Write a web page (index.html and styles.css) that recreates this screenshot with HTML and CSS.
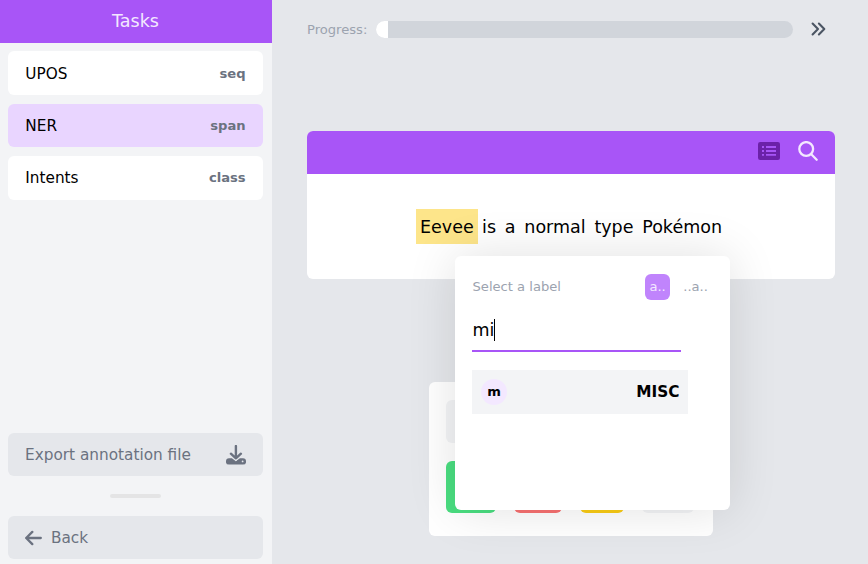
FILE: index.html
```html
<!DOCTYPE html>
<html lang="en">
<head>
<meta charset="utf-8">
<title>Annotation</title>
<link rel="stylesheet" href="styles.css">
</head>
<body>
<div class="app">
  <aside class="sidebar">
    <h1 class="sidebar-title">Tasks</h1>
    <nav class="tasks">
      <div class="task"><span>UPOS</span><b>seq</b></div>
      <div class="task active"><span>NER</span><b>span</b></div>
      <div class="task"><span>Intents</span><b>class</b></div>
    </nav>
    <div class="actions">
      <div class="action export"><span>Export annotation file</span>
        <svg class="download" width="20" height="20" viewBox="0 0 20 20"><path d="M3 13.3H6.3L9.9 16.2L13.5 13.3H17A3 3 0 0 1 20 16.3A3 3 0 0 1 17 19.6H3A3 3 0 0 1 0 16.3A3 3 0 0 1 3 13.3Z" fill="currentColor"/><path d="M9.9 1V13.2M4.9 8.7L9.9 13.3L14.9 8.7" fill="none" stroke="currentColor" stroke-width="2.4" stroke-linecap="round" stroke-linejoin="round"/><path d="M5.9 12.6L9.9 15.7L13.9 12.6" fill="none" stroke="#e5e7eb" stroke-width=".8"/><circle cx="16.6" cy="16.4" r=".9" fill="#e5e7eb"/></svg>
      </div>
      <div class="divider"></div>
      <div class="action"><svg width="17" height="16" viewBox="0 0 17 16"><path d="M15.8 8H1.5M7.3 1.9L1.2 8L7.3 14.1" fill="none" stroke="currentColor" stroke-width="2.3" stroke-linecap="round" stroke-linejoin="round"/></svg><span class="back">Back</span></div>
    </div>
  </aside>
  <main class="main">
    <div class="progress">
      <span class="progress-label">Progress:</span>
      <div class="track"><div class="fill"></div></div>
      <svg class="next" width="15" height="14" viewBox="0 0 15 14"><path d="M1.6 1.6L7 7L1.6 12.4M7.9 1.6L13.3 7L7.9 12.4" fill="none" stroke="currentColor" stroke-width="2.1" stroke-linecap="round" stroke-linejoin="round"/></svg>
    </div>
    <section class="document">
      <header class="document-bar">
        <svg class="list" width="22" height="18" viewBox="0 0 22 18"><rect width="22" height="18" rx="2.2" fill="#6b21a8"/><path d="M4 5H6M4 9H6M4 12.8H6M8 5H18M8 9H18M8 12.8H18" stroke="#a855f7" stroke-width="1.8"/></svg>
        <svg class="search" width="21" height="21" viewBox="0 0 21 21"><g fill="none" stroke="#f3e8ff" stroke-width="2.3" stroke-linecap="round"><circle cx="8.2" cy="8" r="6.9"/><path d="M13.3 13.3L18.7 18.7"/></g></svg>
      </header>
      <p class="sentence"><span class="token marked">Eevee</span><span class="token">is</span><span class="token">a</span><span class="token">normal</span><span class="token">type</span><span class="token">Pokémon</span></p>
      <div class="popup">
        <div class="popup-head"><span class="hint">Select a label</span><span class="mode on">a..</span><span class="mode">..a..</span></div>
        <div class="query">mi<i class="caret"></i></div>
        <div class="option"><span class="key">m</span><b>MISC</b></div>
      </div>
    </section>
    <section class="controls">
      <div class="control-row"></div>
      <div class="buttons"><span class="accept"></span><span class="reject"></span><span class="ignore"></span><span class="undo"></span></div>
    </section>
  </main>
</div>
</body>
</html>
```
FILE: styles.css
```css
* { box-sizing: border-box; }
html { font-size: 17.5px; }
body { margin: 0; font-family: "DejaVu Sans", sans-serif; line-height: 1.5; color: #000; }
.app { display: flex; width: 868px; height: 564px; overflow: hidden; background: #e5e7eb; }
svg { display: block; flex: none; }

.sidebar { width: 272px; flex: none; display: flex; flex-direction: column; background: #f3f4f6; }
.sidebar-title { margin: 0; height: 43px; padding-right: 1px; text-align: center; font-size: 17.5px; font-weight: 400; line-height: 42px; color: #f3e8ff; background: #a855f7; }
.tasks { padding: 8.3px 9px 0 8px; display: flex; flex-direction: column; gap: 8.5px; }
.task { height: 43.8px; padding: 2px 17.4px 0 17.3px; display: flex; align-items: center; justify-content: space-between; border-radius: 6px; background: #fff; font-size: 15.31px; }
.task.active { background: #e9d5ff; }
.task b { margin-top: -1px; font-size: 13.12px; color: #6b7280; }
.actions { margin-top: auto; padding: 0 9px 5px 8px; }
.action { height: 43px; padding: 1px 17px 0; display: flex; align-items: center; border-radius: 6px; background: #e5e7eb; color: #6b7280; font-size: 15.31px; }
.export { justify-content: space-between; }
.divider { width: 51px; height: 4px; margin: 18px auto; border-radius: 2px; background: #e4e4e5; }
.back { margin-left: 9px; }

.main { flex: 1; display: flex; flex-direction: column; padding: 20px 33px 0 35px; }
.progress { display: flex; align-items: center; height: 19px; color: #9ca3af; }
.progress-label { width: 69px; flex: none; font-size: 13.12px; }
.track { width: 417px; flex: none; height: 17px; border-radius: 8.5px; background: #d1d5db; overflow: hidden; }
.fill { width: 12px; height: 17px; background: #fff; }
.next { margin: -1px 0 0 18px; color: #4b5563; }

.document { position: relative; z-index: 1; margin-top: 92px; height: 148px; border-radius: 6px; background: #fff; }
.document-bar { height: 43px; display: flex; gap: 18px; justify-content: flex-end; padding: 11px 16px 0 0; border-radius: 6px 6px 0 0; background: #a855f7; }
.search { margin-top: -1px; }
.sentence { margin: 35px 0 0 109px; display: flex; font-size: 17.5px; }
.token { height: 35px; line-height: 36px; padding: 0 4.38px; }
.marked { padding: 0 4px; background: #fde58a; }

.popup { position: absolute; left: 148px; top: 125px; width: 275px; height: 254px; padding: 18px 17px; border-radius: 6px; background: #fff; box-shadow: 0 0 50px rgba(0, 0, 0, .12); }
.popup-head { display: flex; height: 26px; align-items: center; font-size: 13.12px; color: #9ca3af; }
.hint { width: 173px; padding-left: .5px; flex: none; }
.mode { flex: none; height: 26px; padding: 0 4.4px; line-height: 26px; margin-right: 8.7px; }
.mode.on { border-radius: 6px; color: #f3e8ff; background: #c084fc; }
.query { display: flex; align-items: center; width: 209px; height: 52px; border-bottom: 2px solid #a855f7; font-size: 17.5px; padding: 11px 0 0 .5px; }
.caret { width: 1px; height: 22px; margin: -1px 0 0 -.5px; background: #000; }
.option { display: flex; align-items: center; justify-content: space-between; width: 216px; height: 44px; margin-top: 18px; padding: 0 8.5px 0 9px; background: #f3f4f6; font-size: 15.31px; }
.key { width: 26px; height: 26px; border-radius: 50%; text-align: center; line-height: 26px; font-size: 13.12px; font-weight: 700; background: #f3e8ff; }

.controls { width: 284px; height: 154px; margin: 103px 0 0 122px; padding: 18px 17px; border-radius: 6px; background: #fff; }
.control-row { height: 43px; border-radius: 6px; background: #f3f4f6; }
.buttons { display: flex; gap: 18px; margin-top: 18px; }
.buttons span { height: 52px; border-radius: 6px; }
.accept { width: 50.3px; background: #4ade80; }
.reject { width: 47.5px; background: #f87171; }
.ignore { width: 44.5px; background: #facc15; }
.undo { width: 52px; background: #f3f4f6; }
```
